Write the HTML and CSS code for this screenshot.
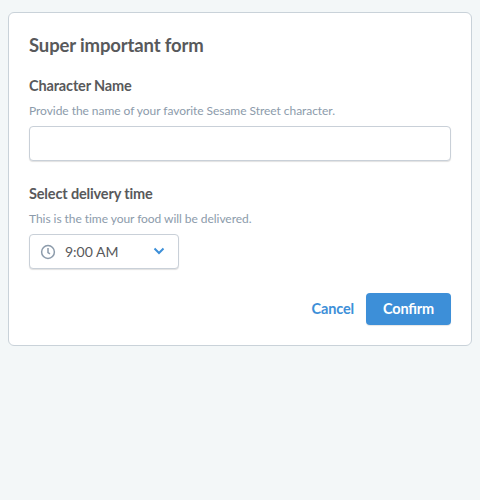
FILE: index.html
```
<!DOCTYPE html>
<html lang="en">
<head>
<meta charset="utf-8">
<title>Super important form</title>
<link rel="stylesheet" href="styles.css">
</head>
<body>
<form class="card">
  <h1 class="title">Super important form</h1>
  <div class="field">
    <label class="label" for="name">Character Name</label>
    <p class="hint">Provide the name of your favorite Sesame Street character.</p>
    <input class="input" id="name" type="text">
  </div>
  <div class="field">
    <span class="label">Select delivery time</span>
    <p class="hint">This is the time your food will be delivered.</p>
    <button class="select" type="button">
      <svg class="clock" viewBox="0 0 16 16"><circle cx="8" cy="8" r="6.4"/><path d="M8 4v4.7l2 1.2"/></svg>
      <span class="value">9:00 AM</span>
      <svg class="chevron" viewBox="0 0 12 8"><path d="M1.5 1.5 6 6l4.5-4.5"/></svg>
    </button>
  </div>
  <div class="actions">
    <button class="btn" type="button">Cancel</button>
    <button class="btn primary" type="button">Confirm</button>
  </div>
</form>
</body>
</html>
```
FILE: styles.css
```
* { box-sizing: border-box; }
body { margin: 0; padding: 12px 8px; background: #f3f7f8; color: #58595b; font-family: Lato, sans-serif; font-size: 15px; }
.card { height: 334px; padding: 20px; background: #fff; border: 1px solid #c9d2d9; border-radius: 6px; }
.title { margin: 0 0 17px; font-size: 18.5px; line-height: 24px; font-weight: 700; letter-spacing: -0.14px; }
.field { margin-bottom: 20px; }
.label { display: block; font-size: 14.5px; line-height: 24px; font-weight: 700; letter-spacing: -0.15px; }
.hint { margin: 4px 0 6px; font-size: 12px; line-height: 18px; letter-spacing: -0.05px; color: #8c9bab; }
.input { display: block; width: 100%; height: 35px; margin-bottom: 21px; border: 1px solid #c9d0d8; border-radius: 4px; box-shadow: 0 1px 1px #0000001f; }
.select { display: flex; align-items: center; width: 150px; height: 35px; padding: 0 12px 0 10px; background: #fff; border: 1px solid #c9d0d8; border-radius: 4px; box-shadow: 0 1px 1px #0000001f; font: inherit; font-size: 14px; color: #58595b; }
.clock { width: 16px; height: 16px; fill: none; stroke: #8c9bab; stroke-width: 1.5; }
.value { margin-left: 9px; }
.chevron { width: 12px; height: 8px; margin: 0 1px 2px auto; fill: none; stroke: #3d8fd8; stroke-width: 2; }
.actions { display: flex; justify-content: flex-end; margin-top: 24px; }
.btn { height: 32px; padding: 0 12px 2px; border: 0; background: none; font: 700 14.5px Lato, sans-serif; letter-spacing: -0.15px; color: #3d8fd8; }
.primary { width: 85px; background: #3d8fd8; border-radius: 4px; color: #fff; box-shadow: 0 1px 1px #0000001a; font-feature-settings: "liga" 1; }
```
